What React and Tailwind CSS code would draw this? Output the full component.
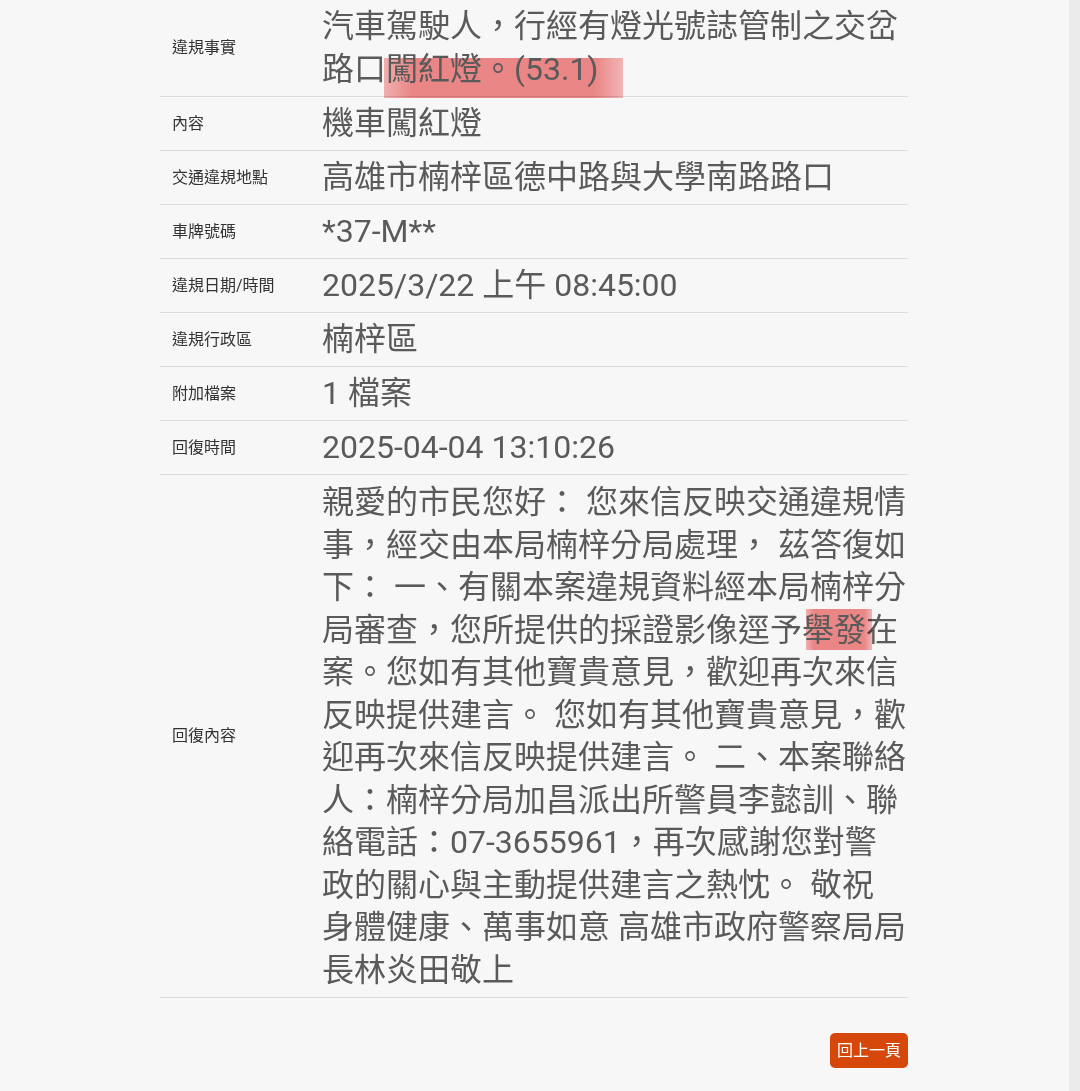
import React from 'react'

const font = { fontFamily: 'Roboto, "Noto Sans CJK TC", sans-serif' }

const Mark = ({ children, className }) => (
  <span className='relative'>
    <span className={'absolute mix-blend-multiply bg-[linear-gradient(to_right,rgba(242,120,120,0.55),rgba(236,88,88,0.7)_12%,rgba(236,88,88,0.7)_88%,rgba(242,120,120,0.5))] ' + className} />
    <span className='relative'>{children}</span>
  </span>
)

const Row = ({ label, children, className = 'py-[5px] leading-[43px]' }) => (
  <div className='flex items-center border-b border-[#dcdcdc]'>
    <div className='w-[162px] shrink-0 pl-3 text-[16px] text-[#333]'>{label}</div>
    <div className={'flex-1 text-[32px] text-[#5a5a5a] ' + className}>{children}</div>
  </div>
)

const reply = [
  '親愛的市民您好： 您來信反映交通違規情',
  '事，經交由本局楠梓分局處理， 茲答復如',
  '下： 一、有關本案違規資料經本局楠梓分',
  null,
  '案。您如有其他寶貴意見，歡迎再次來信',
  '反映提供建言。 您如有其他寶貴意見，歡',
  '迎再次來信反映提供建言。 二、本案聯絡',
  '人：楠梓分局加昌派出所警員李懿訓、聯',
  '絡電話：07-3655961，再次感謝您對警',
  '政的關心與主動提供建言之熱忱。 敬祝',
  '身體健康、萬事如意 高雄市政府警察局局',
  '長林炎田敬上',
]

export default function App() {
  return (
    <div className='flex min-h-screen bg-[#f7f7f7]' style={font}>
      <div className='flex-1 pl-[160px]'>
        <div className='w-[748px]'>
          <Row label='違規事實'>
            汽車駕駛人，行經有燈光號誌管制之交岔<br />
            路口<Mark className='-left-[2px] -right-[24px] top-[8px] -bottom-[10px]'>闖紅燈。(53.1)</Mark>
          </Row>
          <Row label='內容'>機車闖紅燈</Row>
          <Row label='交通違規地點'>高雄市楠梓區德中路與大學南路路口</Row>
          <Row label='車牌號碼'>*37-M**</Row>
          <Row label='違規日期/時間'>2025/3/22 上午 08:45:00</Row>
          <Row label='違規行政區'>楠梓區</Row>
          <Row label='附加檔案'>1 檔案</Row>
          <Row label='回復時間'>2025-04-04 13:10:26</Row>
          <Row label='回復內容' className='py-[6px] leading-[42.5px]'>
            {reply.map((line, i) =>
              line === null ? (
                <div key={i}>
                  局審查，您所提供的採證影像逕予<Mark className='left-[4px] -right-[6px] -top-[2px] -bottom-[1px]'>舉發</Mark>在
                </div>
              ) : (
                <div key={i}>{line}</div>
              )
            )}
          </Row>
          <div className='flex justify-end pt-[35px]'>
            <button className='h-[35px] w-[78px] rounded-[5px] bg-[#d6470c] text-[16px] text-white'>回上一頁</button>
          </div>
        </div>
      </div>
      <div className='w-[11px] shrink-0 bg-[#ebebeb]' />
    </div>
  )
}
